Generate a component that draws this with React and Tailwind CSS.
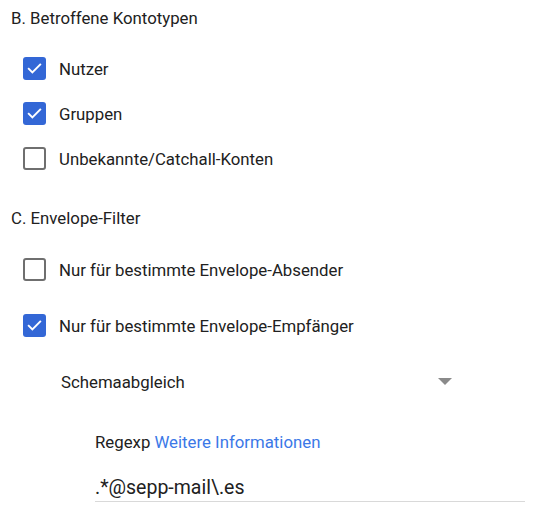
import { useState } from 'react';

function Box({ checked, onClick }) {
    if (checked) {
        return (
            <button onClick={onClick} className="w-[23px] h-[23px] rounded-[3px] bg-[#3367d6] flex items-center justify-center shrink-0">
                <svg width="17" height="17" viewBox="0 0 24 24" fill="none">
                    <path d="M4 12.5l5 5L20 6.5" stroke="#fff" strokeWidth="2.8" strokeLinecap="square" />
                </svg>
            </button>
        );
    }
    return (
        <button onClick={onClick} className="w-[23px] h-[23px] rounded-[3px] border-2 border-[#6f6f6f] bg-white shrink-0" />
    );
}

function Row({ label, checked, onToggle, className }) {
    return (
        <div className={'flex items-center h-[23px] gap-[13px] pl-[23px] ' + (className || '')}>
            <Box checked={checked} onClick={onToggle} />
            <span className="text-[16.8px] leading-[20px] text-[#212121]">{label}</span>
        </div>
    );
}

export default function App() {
    const [vals, setVals] = useState({
        users: true,
        groups: true,
        catchall: false,
        sender: false,
        recipient: true
    });
    const toggle = k => setVals(prev => ({ ...prev, [k]: !prev[k] }));

    return (
        <div className="w-[546px] h-[522px] bg-white overflow-hidden font-['Roboto',sans-serif] text-[#212121]">
            <div className="pt-[8px] pl-[11px] text-[16.8px] leading-[20px]">B. Betroffene Kontotypen</div>

            <Row className="mt-[29px]" label="Nutzer" checked={vals.users} onToggle={() => toggle('users')} />
            <Row className="mt-[22px]" label="Gruppen" checked={vals.groups} onToggle={() => toggle('groups')} />
            <Row className="mt-[22px]" label="Unbekannte/Catchall-Konten" checked={vals.catchall} onToggle={() => toggle('catchall')} />

            <div className="mt-[38px] pl-[11px] text-[16.8px] leading-[20px]">C. Envelope-Filter</div>

            <Row className="mt-[30px]" label="Nur für bestimmte Envelope-Absender" checked={vals.sender} onToggle={() => toggle('sender')} />
            <Row className="mt-[33px]" label="Nur für bestimmte Envelope-Empfänger" checked={vals.recipient} onToggle={() => toggle('recipient')} />

            <div className="mt-[33px] ml-[61px] w-[391px] flex items-center justify-between h-[24px]">
                <span className="text-[16.8px] leading-[20px]">Schemaabgleich</span>
                <svg width="14" height="7" viewBox="0 0 14 7" className="mt-[-2px]">
                    <path d="M0 0h14L7 7z" fill="#8a8a8a" />
                </svg>
            </div>

            <div className="mt-[38px] ml-[95px] text-[16.8px] leading-[20px]">
                Regexp <a href="#" className="text-[#3b78e7]">Weitere Informationen</a>
            </div>

            <div className="mt-[23px] ml-[95px] w-[430px] border-b border-[#d9d9d9]">
                <input
                    defaultValue=".*@sepp-mail\.es"
                    className="w-full outline-none text-[19.5px] leading-[26px] h-[26px] text-[#212121] bg-transparent"
                />
            </div>
        </div>
    );
}
